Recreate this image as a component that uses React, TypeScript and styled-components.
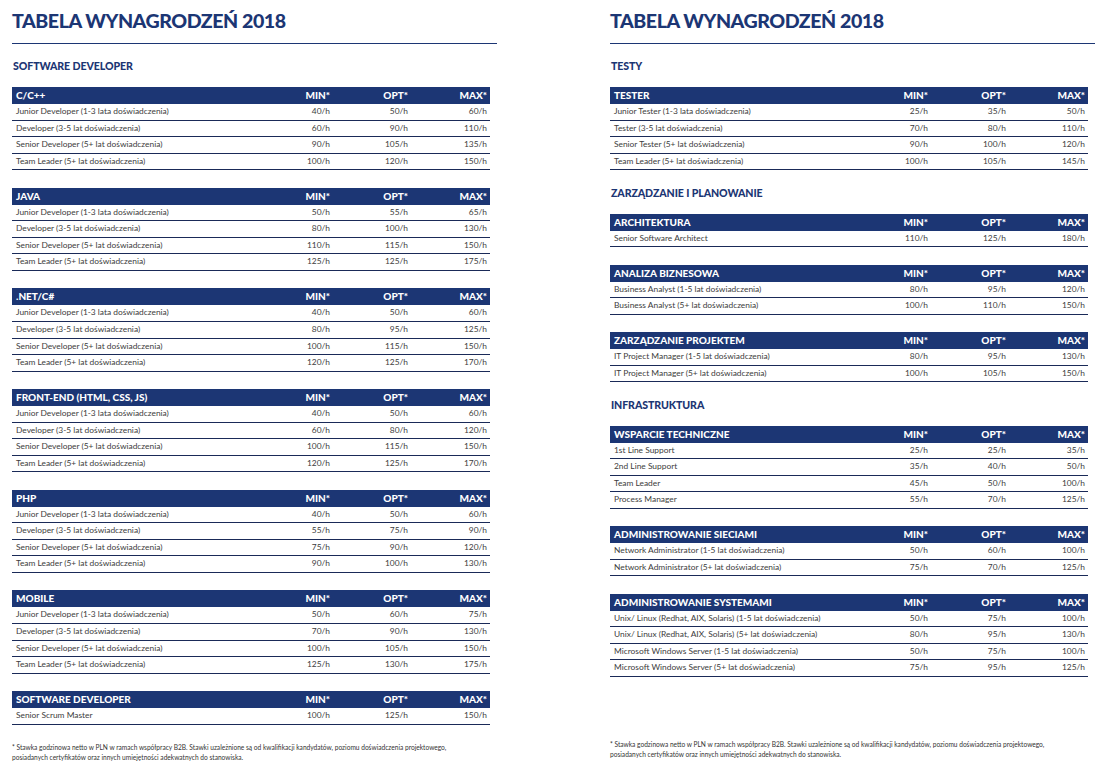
import React from "react";
import styled, { createGlobalStyle } from "styled-components";

const NAVY = "#1c3674";

const Global = createGlobalStyle`
  html, body { margin: 0; padding: 0; background: #ffffff; }
  body { font-family: "Lato", "Liberation Sans", sans-serif; }
`;

type RowData = [string, string, string, string];
type TableData = { title: string; rows: RowData[] };
type Section = { heading?: string; tables: TableData[] };

const J = "Junior Developer (1-3 lata doświadczenia)";
const D = "Developer (3-5 lat doświadczenia)";
const S = "Senior Developer (5+ lat doświadczenia)";
const T = "Team Leader (5+ lat doświadczenia)";

const dev = (title: string, v: string[][]): TableData => ({
  title,
  rows: [J, D, S, T].map((l, i) => [l, v[i][0], v[i][1], v[i][2]] as RowData),
});

const leftSections: Section[] = [
  {
    heading: "SOFTWARE DEVELOPER",
    tables: [
      dev("C/C++", [["40/h", "50/h", "60/h"], ["60/h", "90/h", "110/h"], ["90/h", "105/h", "135/h"], ["100/h", "120/h", "150/h"]]),
      dev("JAVA", [["50/h", "55/h", "65/h"], ["80/h", "100/h", "130/h"], ["110/h", "115/h", "150/h"], ["125/h", "125/h", "175/h"]]),
      dev(".NET/C#", [["40/h", "50/h", "60/h"], ["80/h", "95/h", "125/h"], ["100/h", "115/h", "150/h"], ["120/h", "125/h", "170/h"]]),
      dev("FRONT-END (HTML, CSS, JS)", [["40/h", "50/h", "60/h"], ["60/h", "80/h", "120/h"], ["100/h", "115/h", "150/h"], ["120/h", "125/h", "170/h"]]),
      dev("PHP", [["40/h", "50/h", "60/h"], ["55/h", "75/h", "90/h"], ["75/h", "90/h", "120/h"], ["90/h", "100/h", "130/h"]]),
      dev("MOBILE", [["50/h", "60/h", "75/h"], ["70/h", "90/h", "130/h"], ["100/h", "105/h", "150/h"], ["125/h", "130/h", "175/h"]]),
      { title: "SOFTWARE DEVELOPER", rows: [["Senior Scrum Master", "100/h", "125/h", "150/h"]] },
    ],
  },
];

const rightSections: Section[] = [
  {
    heading: "TESTY",
    tables: [
      {
        title: "TESTER",
        rows: [
          ["Junior Tester (1-3 lata doświadczenia)", "25/h", "35/h", "50/h"],
          ["Tester (3-5 lat doświadczenia)", "70/h", "80/h", "110/h"],
          ["Senior Tester (5+ lat doświadczenia)", "90/h", "100/h", "120/h"],
          ["Team Leader (5+ lat doświadczenia)", "100/h", "105/h", "145/h"],
        ],
      },
    ],
  },
  {
    heading: "ZARZĄDZANIE I PLANOWANIE",
    tables: [
      { title: "ARCHITEKTURA", rows: [["Senior Software Architect", "110/h", "125/h", "180/h"]] },
      {
        title: "ANALIZA BIZNESOWA",
        rows: [
          ["Business Analyst (1-5 lat doświadczenia)", "80/h", "95/h", "120/h"],
          ["Business Analyst (5+ lat doświadczenia)", "100/h", "110/h", "150/h"],
        ],
      },
      {
        title: "ZARZĄDZANIE PROJEKTEM",
        rows: [
          ["IT Project Manager (1-5 lat doświadczenia)", "80/h", "95/h", "130/h"],
          ["IT Project Manager (5+ lat doświadczenia)", "100/h", "105/h", "150/h"],
        ],
      },
    ],
  },
  {
    heading: "INFRASTRUKTURA",
    tables: [
      {
        title: "WSPARCIE TECHNICZNE",
        rows: [
          ["1st Line Support", "25/h", "25/h", "35/h"],
          ["2nd Line Support", "35/h", "40/h", "50/h"],
          ["Team Leader", "45/h", "50/h", "100/h"],
          ["Process Manager", "55/h", "70/h", "125/h"],
        ],
      },
      {
        title: "ADMINISTROWANIE SIECIAMI",
        rows: [
          ["Network Administrator (1-5 lat doświadczenia)", "50/h", "60/h", "100/h"],
          ["Network Administrator (5+ lat doświadczenia)", "75/h", "70/h", "125/h"],
        ],
      },
      {
        title: "ADMINISTROWANIE SYSTEMAMI",
        rows: [
          ["Unix/ Linux (Redhat, AIX, Solaris) (1-5 lat doświadczenia)", "50/h", "75/h", "100/h"],
          ["Unix/ Linux (Redhat, AIX, Solaris) (5+ lat doświadczenia)", "80/h", "95/h", "130/h"],
          ["Microsoft Windows Server (1-5 lat doświadczenia)", "50/h", "75/h", "100/h"],
          ["Microsoft Windows Server (5+ lat doświadczenia)", "75/h", "95/h", "125/h"],
        ],
      },
    ],
  },
];

const Sheet = styled.div`
  display: grid;
  grid-template-columns: 597px 505px;
  width: 1102px;
  height: 765px;
  overflow: hidden;
`;

const Page = styled.section<{ $pad: number }>`
  display: flex;
  flex-direction: column;
  height: 765px;
  padding-left: ${(p) => p.$pad}px;
  box-sizing: border-box;
`;

const Title = styled.h1`
  margin: 8px 0 0 0;
  height: 26px;
  line-height: 26px;
  font-family: "Lato", sans-serif;
  font-weight: 900;
  font-size: 19.6px;
  color: ${NAVY};
  letter-spacing: -0.45px;
  white-space: nowrap;
`;

const Rule = styled.hr`
  margin: 9px 0 0 0;
  width: 485px;
  border: none;
  border-top: 1px solid ${NAVY};
  height: 0;
`;

const SectionTitle = styled.h2<{ $first?: boolean }>`
  margin: ${(p) => (p.$first ? "17px" : "0")} 0 15px 1px;
  height: 11px;
  line-height: 11px;
  font-family: "Lato", sans-serif;
  font-weight: 900;
  font-size: 10.6px;
  letter-spacing: -0.1px;
  color: ${NAVY};
`;

const Table = styled.div`
  display: grid;
  grid-template-columns: 238px 83px 78px 79px;
  width: 478px;
  margin-bottom: 17.3px;
`;

const HeadCell = styled.div<{ $right?: boolean }>`
  height: 17px;
  line-height: 17px;
  background: ${NAVY};
  color: #ffffff;
  font-family: "Lato", sans-serif;
  font-weight: 900;
  font-size: 10px;
  padding: 0 ${(p) => (p.$right ? "3px" : "0")} 0 ${(p) => (p.$right ? "0" : "4px")};
  text-align: ${(p) => (p.$right ? "right" : "left")};
  white-space: nowrap;
  box-sizing: border-box;
`;

const Cell = styled.div<{ $right?: boolean }>`
  height: 16.6px;
  line-height: 15.6px;
  border-bottom: 1px solid #1a2a58;
  color: #3c3c3c;
  font-family: "Lato", sans-serif;
  font-size: 8.4px;
  padding: 0 ${(p) => (p.$right ? "3px" : "0")} 0 ${(p) => (p.$right ? "0" : "4px")};
  text-align: ${(p) => (p.$right ? "right" : "left")};
  white-space: nowrap;
  box-sizing: border-box;
`;

const Footnote = styled.p`
  margin: auto 0 6px 0;
  font-family: "Lato", sans-serif;
  font-size: 6.6px;
  line-height: 10px;
  color: #333333;
  white-space: nowrap;
`;

const PriceTable: React.FC<{ data: TableData }> = ({ data }) => (
  <Table>
    <HeadCell>{data.title}</HeadCell>
    <HeadCell $right>MIN*</HeadCell>
    <HeadCell $right>OPT*</HeadCell>
    <HeadCell $right>MAX*</HeadCell>
    {data.rows.map((r, i) => (
      <React.Fragment key={i}>
        <Cell>{r[0]}</Cell>
        <Cell $right>{r[1]}</Cell>
        <Cell $right>{r[2]}</Cell>
        <Cell $right>{r[3]}</Cell>
      </React.Fragment>
    ))}
  </Table>
);

const SalaryPage: React.FC<{ sections: Section[]; pad: number }> = ({ sections, pad }) => (
  <Page $pad={pad}>
    <Title>TABELA WYNAGRODZEŃ 2018</Title>
    <Rule />
    {sections.map((s, i) => (
      <React.Fragment key={i}>
        {s.heading && <SectionTitle $first={i === 0}>{s.heading}</SectionTitle>}
        {s.tables.map((t, j) => (
          <PriceTable key={j} data={t} />
        ))}
      </React.Fragment>
    ))}
    <Footnote>
      * Stawka godzinowa netto w PLN w ramach współpracy B2B. Stawki uzależnione są od kwalifikacji kandydatów, poziomu doświadczenia projektowego,
      <br />
      posiadanych certyfikatów oraz innych umiejętności adekwatnych do stanowiska.
    </Footnote>
  </Page>
);

export default function App() {
  return (
    <>
      <Global />
      <Sheet>
        <SalaryPage sections={leftSections} pad={12} />
        <SalaryPage sections={rightSections} pad={13} />
      </Sheet>
    </>
  );
}
